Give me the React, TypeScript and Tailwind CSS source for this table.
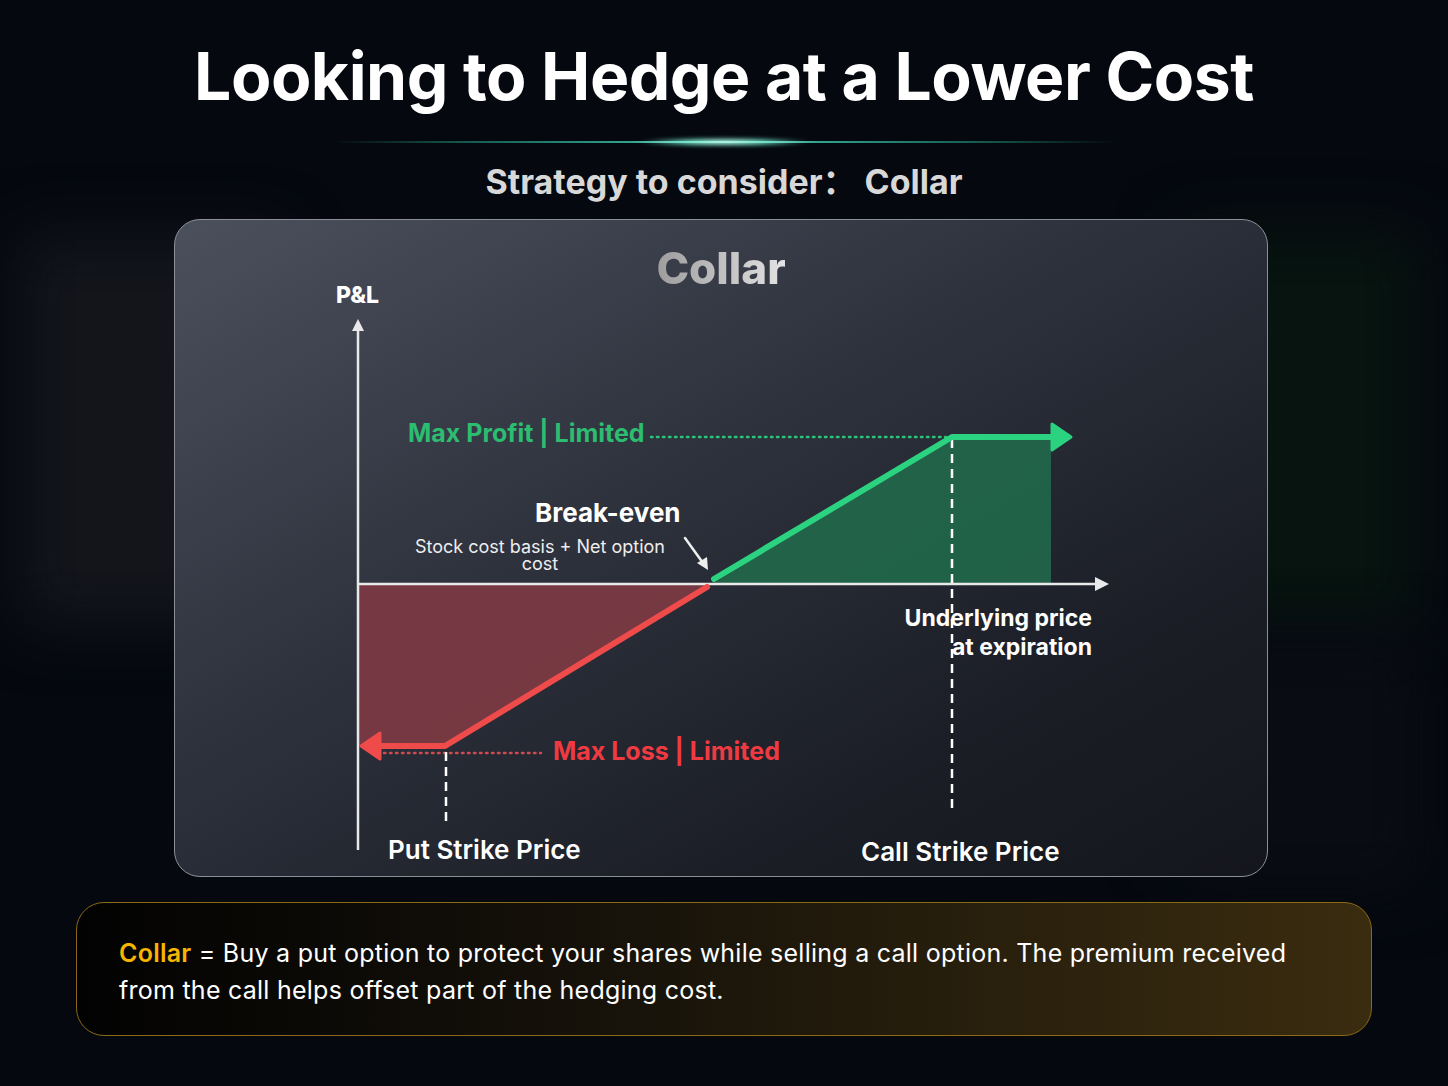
import React from "react";

const sans = { fontFamily: "Inter, 'Noto Sans', 'Noto Sans CJK SC', sans-serif" };

function GlowLine() {
  return (
    <div className="relative mt-[22px] flex h-[8px] w-[780px] items-center justify-center">
      <div className="h-[2px] w-full bg-[linear-gradient(90deg,transparent,#145249_15%,#2fa38d_38%,#b5fbe9_50%,#2fa38d_62%,#145249_85%,transparent)]" />
      <div className="absolute h-[8px] w-[170px] rounded-full bg-[radial-gradient(ellipse_at_center,#f0fffa_0%,#6fe3c8_35%,transparent_72%)] blur-[2px]" />
    </div>
  );
}

function PayoffChart() {
  return (
    <svg
      className="absolute inset-0"
      width={1094}
      height={658}
      viewBox="0 0 1094 658"
      fill="none"
    >
      {/* shaded zones */}
      <polygon points="537,364 777,217 876,217 876,364" fill="#21654a" fillOpacity={0.95} />
      <polygon points="183,364 533,364 270,526 183,526" fill="#7a3a43" fillOpacity={0.95} />

      {/* dotted guides */}
      <line x1={476} y1={217} x2={771} y2={217} stroke="#2bc27a" strokeWidth={2.5} strokeDasharray="1.5 4.5" strokeLinecap="round" />
      <line x1={209} y1={533} x2={366} y2={533} stroke="#d14a4f" strokeWidth={2.5} strokeDasharray="1.5 4.5" strokeLinecap="round" />

      {/* axes */}
      <line x1={183} y1={108} x2={183} y2={630} stroke="#e9e9e9" strokeWidth={2.5} />
      <polygon points="183,99 177,111 189,111" fill="#e9e9e9" />
      <line x1={183} y1={364} x2={920} y2={364} stroke="#e9e9e9" strokeWidth={2.5} />
      <polygon points="934,364 920,357 920,371" fill="#e9e9e9" />

      {/* strike markers */}
      <line x1={777} y1={219} x2={777} y2={594} stroke="#ffffff" strokeWidth={2.5} strokeDasharray="9 6" />
      <line x1={271} y1={532} x2={271} y2={606} stroke="#ffffff" strokeWidth={2.5} strokeDasharray="9 6" />

      {/* payoff */}
      <polyline points="539,359 777,217 878,217" stroke="#2bd280" strokeWidth={6} strokeLinecap="round" strokeLinejoin="round" />
      <polygon points="896,217 877,204 877,230" fill="#2bd280" stroke="#2bd280" strokeWidth={3} strokeLinejoin="round" />
      <polyline points="532,367 270,526 204,526" stroke="#ef4b4b" strokeWidth={6} strokeLinecap="round" strokeLinejoin="round" />
      <polygon points="186,526 205,513 205,539" fill="#ef4b4b" stroke="#ef4b4b" strokeWidth={3} strokeLinejoin="round" />

      {/* break-even pointer */}
      <line x1={510} y1={318} x2={528} y2={343} stroke="#eeeeee" strokeWidth={2.5} strokeLinecap="round" />
      <polygon points="533,350 522,343 532,337" fill="#eeeeee" />
    </svg>
  );
}

function CollarCard() {
  return (
    <div className="relative mr-[6px] mt-[15px] flex h-[658px] w-[1094px] flex-col items-center overflow-hidden rounded-[26px] border border-[#8b8f98] bg-[linear-gradient(150deg,#4b505d_0%,#2f333e_40%,#1b1e26_75%,#14161c_100%)] pt-[22px]">
      <PayoffChart />

      <div
        className="relative text-[44px] font-extrabold leading-[52px] text-transparent bg-[linear-gradient(90deg,#9d9d9d,#e3e3e3)] bg-clip-text"
        style={sans}
      >
        Collar
      </div>

      {/* diagram labels */}
      <div className="absolute left-[161px] top-[61px] text-[23px] font-extrabold leading-[28px] text-white" style={sans}>
        P&amp;L
      </div>

      <div className="absolute left-[233px] top-[198px] text-[25px] font-bold leading-[30px] text-[#2cbd70]" style={sans}>
        Max Profit | Limited
      </div>

      <div className="absolute left-[360px] top-[278px] text-[26px] font-bold leading-[30px] text-white" style={sans}>
        Break-even
      </div>

      <div className="absolute left-[215px] top-[318px] w-[300px] text-center text-[18px] leading-[17px] text-[#eeeeee]" style={sans}>
        Stock cost basis + Net option
        <br />
        cost
      </div>

      <div className="absolute right-[175px] top-[384px] text-right text-[23px] font-bold leading-[29px] text-white" style={sans}>
        Underlying price
        <br />
        at expiration
      </div>

      <div className="absolute left-[378px] top-[516px] text-[25px] font-bold leading-[30px] text-[#f03a42]" style={sans}>
        Max Loss | Limited
      </div>

      <div className="absolute left-[213px] top-[615px] text-[26px] font-semibold leading-[30px] text-white" style={sans}>
        Put Strike Price
      </div>

      <div className="absolute left-[686px] top-[617px] text-[26px] font-semibold leading-[30px] text-white" style={sans}>
        Call Strike Price
      </div>
    </div>
  );
}

function DefinitionBox() {
  return (
    <div className="mt-[25px] w-[1296px] rounded-[28px] border border-[#8a6a14] bg-[linear-gradient(90deg,#020202_0%,#16120a_40%,#3a2c0f_100%)] px-[42px] pb-[26px] pt-[32px]">
      <p className="text-[25px] leading-[37px] tracking-[0.25px] text-white" style={sans}>
        <span className="font-semibold text-[#f7b500]">Collar</span> = Buy a put option to protect your
        shares while selling a call option. The premium received
        <br />
        from the call helps offset part of the hedging cost.
      </p>
    </div>
  );
}

export default function App() {
  return (
    <div className="relative min-h-[1086px] w-full overflow-hidden bg-[#05080f]">
      {/* ambient glows behind the card */}
      <div className="pointer-events-none absolute left-[20px] top-[235px] h-[390px] w-[260px] bg-[#13151b] blur-[30px]" />
      <div className="pointer-events-none absolute left-[1180px] top-[230px] h-[400px] w-[240px] bg-[#07140f] blur-[30px]" />
      <div className="pointer-events-none absolute left-[1180px] top-[640px] h-[250px] w-[240px] bg-[#0a0c14] blur-[30px]" />

      <div className="relative flex flex-col items-center pt-[36px]">
        <h1 className="text-[66px] font-bold leading-[80px] tracking-[-0.5px] text-white" style={sans}>
          Looking to Hedge at a Lower Cost
        </h1>
        <GlowLine />
        <div className="mt-[14px] text-[34px] font-bold leading-[44px] text-[#d8d8d8]" style={sans}>
          Strategy to consider：&nbsp;Collar
        </div>
        <CollarCard />
        <DefinitionBox />
      </div>
    </div>
  );
}
